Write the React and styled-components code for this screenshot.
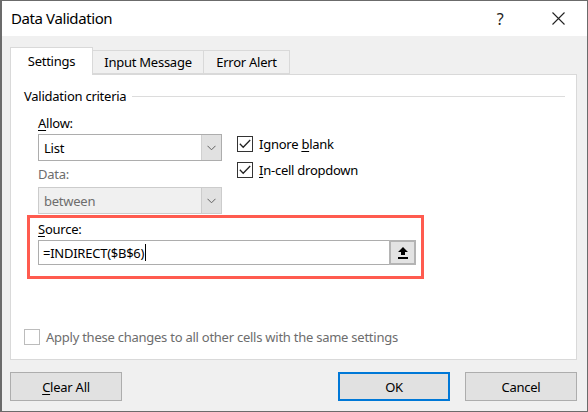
import React from "react";
import styled, { createGlobalStyle } from "styled-components";

const Global = createGlobalStyle`
  html, body { margin: 0; padding: 0; background: #ffffff; }
  body { font-family: "Noto Sans", "Segoe UI", sans-serif; }
  * { box-sizing: border-box; }
`;

const Window = styled.div`
  width: 588px;
  height: 412px;
  border: 1px solid #6b6b6b;
  border-left-width: 2px;
  background: #f0f0f0;
  display: flex;
  flex-direction: column;
  color: #000;
  font-size: 13px;
  letter-spacing: -0.25px;
`;

const TitleBar = styled.div`
  height: 36px;
  background: #fff;
  display: flex;
  align-items: center;
  padding-left: 9px;
  font-size: 15px;
  letter-spacing: -0.4px;
`;

const Title = styled.div`
  flex: 1;
  padding-bottom: 1px;
`;

const TitleButton = styled.div`
  width: ${(p) => p.$w}px;
  display: flex;
  justify-content: center;
  align-items: center;
  font-size: 16px;
  color: #222;
`;

const Body = styled.div`
  flex: 1;
  padding: 10px 10px 10px 8px;
  display: flex;
  flex-direction: column;
`;

const TabRow = styled.div`
  display: flex;
  align-items: flex-end;
  height: 28px;
  position: relative;
  z-index: 1;
`;

const Tab = styled.div`
  height: ${(p) => (p.$active ? 28 : 24)}px;
  width: ${(p) => p.$w}px;
  display: flex;
  align-items: center;
  justify-content: center;
  background: ${(p) => (p.$active ? "#fff" : "#f0f0f0")};
  border: 1px solid #d9d9d9;
  border-bottom: ${(p) => (p.$active ? "none" : "1px solid #d9d9d9")};
  border-left: ${(p) => (p.$first || p.$active ? "1px solid #d9d9d9" : "none")};
  margin-bottom: ${(p) => (p.$active ? -1 : 0)}px;
  padding-bottom: ${(p) => (p.$active ? 2 : 0)}px;
`;

const Panel = styled.div`
  height: 286px;
  background: #fff;
  border: 1px solid #d9d9d9;
  display: flex;
  flex-direction: column;
  padding: 11px 11px 0 13px;
`;

const GroupHead = styled.div`
  display: flex;
  align-items: center;
  gap: 6px;
  height: 20px;
  &::after {
    content: "";
    flex: 1;
    height: 1px;
    background: #dcdcdc;
  }
`;

const Criteria = styled.div`
  padding-left: 14px;
  display: flex;
  flex-direction: column;
`;

const TopRow = styled.div`
  display: flex;
  gap: 15px;
`;

const FieldCol = styled.div`
  display: flex;
  flex-direction: column;
  width: 184px;
`;

const Label = styled.div`
  height: ${(p) => p.$h || 20}px;
  display: flex;
  align-items: center;
  color: ${(p) => (p.$disabled ? "#6d6d6d" : "#000")};
`;

const Combo = styled.div`
  display: flex;
  height: 27px;
  border: 1px solid ${(p) => (p.$disabled ? "#cccccc" : "#adadad")};
  background: ${(p) => (p.$disabled ? "#f0f0f0" : "#fff")};
`;

const ComboText = styled.div`
  flex: 1;
  display: flex;
  align-items: center;
  padding-left: 5px;
  color: ${(p) => (p.$disabled ? "#6d6d6d" : "#000")};
`;

const ComboButton = styled.div`
  width: 20px;
  background: #e1e1e1;
  border-left: 1px solid ${(p) => (p.$disabled ? "#cccccc" : "#d0d0d0")};
  display: flex;
  align-items: center;
  justify-content: center;
`;

const Checks = styled.div`
  display: flex;
  flex-direction: column;
  gap: 11px;
  padding-top: 30px;
`;

const CheckRow = styled.div`
  display: flex;
  align-items: center;
  gap: 6px;
  height: 15px;
  color: ${(p) => (p.$disabled ? "#6d6d6d" : "#000")};
`;

const Box = styled.div`
  width: 16px;
  height: 16px;
  border: 1px solid ${(p) => (p.$disabled ? "#bcbcbc" : "#333333")};
  background: #fff;
  display: flex;
  align-items: center;
  justify-content: center;
`;

const Highlight = styled.div`
  margin: 1px 0 0 -11px;
  width: 397px;
  height: 64px;
  border: 3px solid #ff5b4f;
  padding: 0 5px 0 8px;
  display: flex;
  flex-direction: column;
`;

const SourceInput = styled.div`
  height: 25px;
  display: flex;
  border: 1px solid #adadad;
  border-right: none;
`;

const SourceText = styled.div`
  flex: 1;
  display: flex;
  align-items: center;
  padding-left: 4px;
`;

const Caret = styled.span`
  display: inline-block;
  width: 1px;
  height: 17px;
  background: #000;
  margin-left: 1px;
`;

const RefButton = styled.div`
  width: 27px;
  margin-top: -1px;
  margin-bottom: -1px;
  border: 2px solid #b4b4b4;
  background: #e3e3e3;
  display: flex;
  align-items: center;
  justify-content: center;
`;

const ApplyRow = styled.div`
  margin-top: auto;
  margin-bottom: 15px;
`;

const Footer = styled.div`
  display: flex;
  margin-top: 12px;
  gap: 15px;
`;

const Button = styled.div`
  width: 112px;
  height: 29px;
  background: #e1e1e1;
  border: ${(p) => (p.$default ? "2px solid #0078d7" : "1px solid #adadad")};
  display: flex;
  align-items: center;
  justify-content: center;
  margin-left: ${(p) => (p.$push ? "auto" : 0)};
`;

const U = styled.span`
  text-decoration: underline;
  text-underline-offset: 2px;
`;

const Chevron = ({ color }) => (
  <svg width="9" height="6" viewBox="0 0 9 6">
    <polyline points="0.5,0.8 4.5,4.8 8.5,0.8" fill="none" stroke={color} strokeWidth="1" />
  </svg>
);

const Check = () => (
  <svg width="12" height="10" viewBox="0 0 12 10">
    <polyline points="0.8,4.8 4.2,8.2 11.2,1" fill="none" stroke="#222" strokeWidth="1.3" />
  </svg>
);

const RefIcon = () => (
  <svg width="12" height="14" viewBox="0 0 12 14">
    <polygon points="6,1 11,6 8,6 8,9 4,9 4,6 1,6" fill="#000" />
    <rect x="1" y="11" width="10" height="2" fill="#000" />
  </svg>
);

const CloseIcon = () => (
  <svg width="13" height="13" viewBox="0 0 13 13">
    <path d="M0.5 0.5 L12.5 12.5 M12.5 0.5 L0.5 12.5" stroke="#222" strokeWidth="1.1" />
  </svg>
);

export default function App() {
  return (
    <>
      <Global />
      <Window>
        <TitleBar>
          <Title>Data Validation</Title>
          <TitleButton $w={24}>?</TitleButton>
          <TitleButton $w={34} />
          <TitleButton $w={24}><CloseIcon /></TitleButton>
          <TitleButton $w={17} />
        </TitleBar>
        <Body>
          <TabRow>
            <Tab $active $first $w={83}>Settings</Tab>
            <Tab $w={111}>Input Message</Tab>
            <Tab $w={86}>Error Alert</Tab>
          </TabRow>
          <Panel>
            <GroupHead>Validation criteria</GroupHead>
            <Criteria>
              <TopRow>
                <FieldCol>
                  <Label $h={28} style={{ paddingTop: 6 }}><span><U>A</U>llow:</span></Label>
                  <Combo>
                    <ComboText>List</ComboText>
                    <ComboButton><Chevron color="#606060" /></ComboButton>
                  </Combo>
                  <Label $h={26} $disabled>Data:</Label>
                  <Combo $disabled>
                    <ComboText $disabled>between</ComboText>
                    <ComboButton $disabled><Chevron color="#606060" /></ComboButton>
                  </Combo>
                </FieldCol>
                <Checks>
                  <CheckRow>
                    <Box><Check /></Box>
                    <span>Ignore <U>b</U>lank</span>
                  </CheckRow>
                  <CheckRow>
                    <Box><Check /></Box>
                    <span><U>I</U>n-cell dropdown</span>
                  </CheckRow>
                </Checks>
              </TopRow>
              <Highlight>
                <Label $h={22}><span><U>S</U>ource:</span></Label>
                <SourceInput>
                  <SourceText>=INDIRECT($B$6)<Caret /></SourceText>
                  <RefButton><RefIcon /></RefButton>
                </SourceInput>
              </Highlight>
            </Criteria>
            <ApplyRow>
              <CheckRow $disabled>
                <Box $disabled />
                <span>Apply these changes to all other cells with the same settings</span>
              </CheckRow>
            </ApplyRow>
          </Panel>
          <Footer>
            <Button><span><U>C</U>lear All</span></Button>
            <Button $default $push>OK</Button>
            <Button>Cancel</Button>
          </Footer>
        </Body>
      </Window>
    </>
  );
}
